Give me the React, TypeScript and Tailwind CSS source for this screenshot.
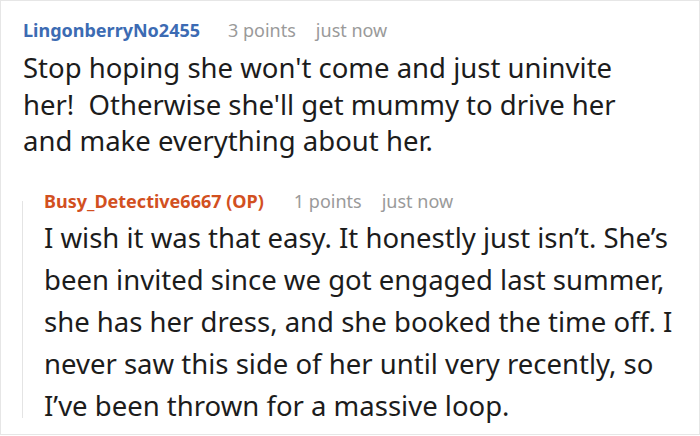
export default function App() {
  return (
    <div
      className="w-[700px] h-[435px] border border-[#e6e6e6] bg-white overflow-hidden"
      style={{ fontFamily: '"Noto Sans", sans-serif' }}
    >
      <div className="pl-[22px] pt-[17px]">
        <div className="flex items-baseline text-[18px] leading-[24px] whitespace-nowrap">
          <span className="font-bold text-[#3c6bb3]">LingonberryNo2455</span>
          <span className="ml-[28px] text-[#9a9a9a]">3 points</span>
          <span className="ml-[20px] text-[#9a9a9a]">just now</span>
        </div>
        <div className="mt-[8px] text-[27.5px] leading-[36.5px] text-[#1c1c1c] whitespace-nowrap">
          Stop hoping she won't come and just uninvite
          <br />
          her!&nbsp; Otherwise she'll get mummy to drive her
          <br />
          and make everything about her.
        </div>
      </div>
      <div className="ml-[21px] mt-[29px] flex">
        <div className="w-px bg-[#e4e4e4] mt-[12px] mb-[9px]" />
        <div className="pl-[21px]">
          <div className="flex items-baseline text-[18px] leading-[24px] whitespace-nowrap">
            <span className="font-bold text-[#d2501f]">Busy_Detective6667 (OP)</span>
            <span className="ml-[30px] text-[#9a9a9a]">1 points</span>
            <span className="ml-[20px] text-[#9a9a9a]">just now</span>
          </div>
          <div className="mt-[4px] text-[27.5px] leading-[42px] text-[#1c1c1c] whitespace-nowrap">
            I wish it was that easy. It honestly just isn’t. She’s
            <br />
            been invited since we got engaged last summer,
            <br />
            she has her dress, and she booked the time off. I
            <br />
            never saw this side of her until very recently, so
            <br />
            I’ve been thrown for a massive loop.
          </div>
        </div>
      </div>
    </div>
  );
}
